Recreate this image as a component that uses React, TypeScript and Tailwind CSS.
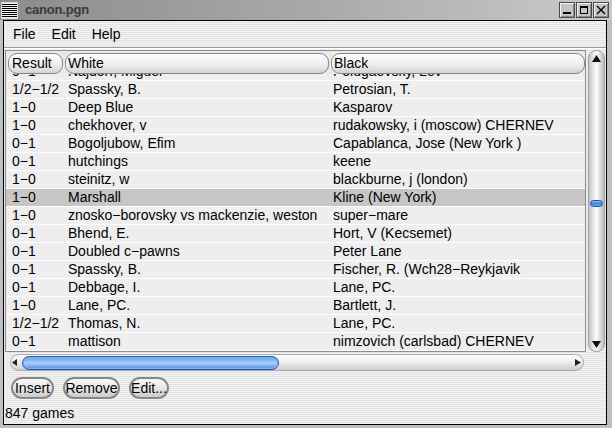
import React from "react";

type Row = { r: string; w: string; b: string; sel?: boolean };

const rows: Row[] = [
  { r: "0−1", w: "Najdorf, Miguel", b: "Polugaevsky, Lev" },
  { r: "1/2−1/2", w: "Spassky, B.", b: "Petrosian, T." },
  { r: "1−0", w: "Deep Blue", b: "Kasparov" },
  { r: "1−0", w: "chekhover, v", b: "rudakowsky, i (moscow) CHERNEV" },
  { r: "0−1", w: "Bogoljubow, Efim", b: "Capablanca, Jose (New York )" },
  { r: "0−1", w: "hutchings", b: "keene" },
  { r: "1−0", w: "steinitz, w", b: "blackburne, j (london)" },
  { r: "1−0", w: "Marshall", b: "Kline (New York)", sel: true },
  { r: "1−0", w: "znosko−borovsky vs mackenzie, weston", b: "super−mare" },
  { r: "0−1", w: "Bhend, E.", b: "Hort, V (Kecsemet)" },
  { r: "0−1", w: "Doubled c−pawns", b: "Peter Lane" },
  { r: "0−1", w: "Spassky, B.", b: "Fischer, R. (Wch28−Reykjavik" },
  { r: "0−1", w: "Debbage, I.", b: "Lane, PC." },
  { r: "1−0", w: "Lane, PC.", b: "Bartlett, J." },
  { r: "1/2−1/2", w: "Thomas, N.", b: "Lane, PC." },
  { r: "0−1", w: "mattison", b: "nimzovich (carlsbad) CHERNEV" },
];

function TitleButton({ kind }: { kind: "min" | "max" | "close" }) {
  return (
    <div className="w-[16px] h-[16px] border border-[#4a4a4a] bg-[#c4c4c4] shadow-[inset_1px_1px_0_#f4f4f4,inset_-1px_-1px_0_#8a8a8a] flex items-center justify-center">
      <svg width="12" height="12" viewBox="0 0 12 12">
        {kind === "min" && <rect x="2" y="8" width="8" height="2" fill="#000" />}
        {kind === "max" && (
          <>
            <rect x="2.5" y="2.5" width="7" height="7" fill="none" stroke="#000" strokeWidth="1" />
            <rect x="2" y="2" width="8" height="2" fill="#000" />
          </>
        )}
        {kind === "close" && (
          <path d="M2 2 L10 10 M10 2 L2 10" stroke="#000" strokeWidth="1.4" />
        )}
      </svg>
    </div>
  );
}

function HeaderButton({ label, w, pl }: { label: string; w: string; pl: string }) {
  return (
    <div
      className={`${w} ${pl} h-[21px] shrink-0 rounded-[9px] border border-[#858585] bg-gradient-to-b from-[#fefefe] via-[#f0f0f0] to-[#d4d4d4] shadow-[inset_1px_1px_0_#ffffff] leading-[19px] overflow-hidden whitespace-nowrap`}
    >
      {label}
    </div>
  );
}

function PushButton({ label, w }: { label: string; w: string }) {
  return (
    <div
      className={`${w} h-[22px] rounded-full border-2 border-[#888888] bg-gradient-to-b from-[#f8f8f8] via-[#e8e8e8] to-[#cbcbcb] flex items-center justify-center leading-[18px] whitespace-nowrap`}
    >
      {label}
    </div>
  );
}

export default function App() {
  return (
    <div className="w-[612px] h-[428px] flex flex-col bg-[#bfbfbf] font-['Liberation_Sans',Arial,sans-serif] text-[14px] text-black overflow-hidden">
      {/* Title bar */}
      <div className="h-[20px] shrink-0 flex items-center bg-gradient-to-r from-[#8c8c8c] via-[#a8a8a8] to-[#cacaca]">
        <div className="ml-[1px] w-[17px] h-[17px] bg-[#f2f2f2] border border-[#d8d8d8]">
          <svg width="15" height="15" viewBox="0 0 15 15">
            {[1, 3, 5, 7, 9, 11, 13].map((y) => (
              <rect key={y} x="0" y={y} width="15" height="1" fill="#000" />
            ))}
          </svg>
        </div>
        <span className="ml-[7px] font-bold text-[13px] text-[#3a3a3a] tracking-[-0.2px]">canon.pgn</span>
        <div className="ml-auto mr-[3px] flex gap-[1px]">
          <TitleButton kind="min" />
          <TitleButton kind="max" />
          <TitleButton kind="close" />
        </div>
      </div>

      {/* Window body */}
      <div className="flex-1 flex pl-[3px] pr-[5px] pb-[5px]">
        <div className="flex-1 flex flex-col border border-black bg-[repeating-linear-gradient(180deg,#f2f2f2_0px,#f2f2f2_1px,#e3e3e3_1px,#e3e3e3_2px)]">
          {/* Menubar */}
          <div className="h-[26px] shrink-0 flex items-center pl-[1px] pt-[1px]">
            <span className="px-[8px]">File</span>
            <span className="px-[8px]">Edit</span>
            <span className="px-[8px]">Help</span>
          </div>
          <div className="h-[2px] shrink-0 flex flex-col">
            <div className="h-[1px] bg-[#9c9c9c]" />
            <div className="h-[1px] bg-white" />
          </div>
          <div className="h-[1px] shrink-0" />

          {/* List block */}
          <div className="h-[302px] shrink-0 flex pl-[1px]">
            <div className="w-[581px] h-full border border-[#8c8c8c] flex flex-col bg-[#e9e9e9]">
              <div className="h-[23px] shrink-0 flex pt-[2px] pl-[2px] gap-[2px]">
                <HeaderButton label="Result" w="w-[55px]" pl="pl-[3px]" />
                <HeaderButton label="White" w="w-[264px]" pl="pl-[2px]" />
                <HeaderButton label="Black" w="w-[254px]" pl="pl-[2px]" />
              </div>
              <div className="flex-1 overflow-hidden bg-[#eeeeee]">
                <div className="-mt-[11px]">
                  {rows.map((row, i) => (
                    <div
                      key={i}
                      className={`h-[18px] flex border-b border-white leading-[17px] whitespace-nowrap ${
                        row.sel ? "bg-[#c6c6c6]" : "bg-[#eeeeee]"
                      }`}
                    >
                      <div className="w-[58px] shrink-0 pl-[6px] overflow-hidden">{row.r}</div>
                      <div className="w-[265px] shrink-0 pl-[4px] overflow-hidden">{row.w}</div>
                      <div className="flex-1 pl-[4px] overflow-hidden">{row.b}</div>
                    </div>
                  ))}
                </div>
              </div>
            </div>
            {/* Vertical scrollbar */}
            <div className="ml-[2px] w-[17px] h-full rounded-[8px] border border-[#a0a0a0] bg-gradient-to-r from-[#c6c6c6] via-[#fbfbfb] to-[#bcbcbc] flex flex-col items-center">
              <svg className="mt-[4px]" width="9" height="7" viewBox="0 0 9 7">
                <path d="M4.5 0 L9 7 L0 7 Z" fill="#111" />
              </svg>
              <div className="mt-[138px] w-[13px] h-[7px] rounded-full border border-[#1d4fb0] bg-gradient-to-b from-[#8cc0f6] via-[#3f84e6] to-[#6aa8f0]" />
              <div className="flex-1" />
              <svg className="mb-[3px]" width="9" height="7" viewBox="0 0 9 7">
                <path d="M0 0 L9 0 L4.5 7 Z" fill="#111" />
              </svg>
            </div>
          </div>

          <div className="h-[2px] shrink-0" />

          {/* Horizontal scrollbar */}
          <div className="h-[17px] shrink-0 pl-[6px] flex">
            <div className="w-[574px] h-full rounded-full border border-[#a8a8a8] bg-gradient-to-b from-[#fdfdfd] via-[#ececec] to-[#cdcdcd] flex items-center">
              <svg className="ml-[1px]" width="5" height="7" viewBox="0 0 5 7">
                <path d="M0 3.5 L5 0 L5 7 Z" fill="#222" />
              </svg>
              <div className="ml-[5px] w-[257px] h-[14px] rounded-full border border-[#2455b8] bg-gradient-to-b from-[#5f9cec] via-[#a9d0fa] to-[#4f8fe6] shadow-[inset_0_0_0_1px_#7fb3f2]" />
              <div className="flex-1" />
              <svg className="mr-[2px]" width="6" height="7" viewBox="0 0 6 7">
                <path d="M0 0 L6 3.5 L0 7 Z" fill="#222" />
              </svg>
            </div>
          </div>

          <div className="h-[6px] shrink-0" />

          {/* Buttons */}
          <div className="h-[22px] shrink-0 flex items-center pl-[7px] gap-[9px]">
            <PushButton label="Insert" w="w-[43px]" />
            <PushButton label="Remove" w="w-[57px]" />
            <PushButton label="Edit..." w="w-[40px]" />
          </div>

          <div className="h-[2px] shrink-0" />

          {/* Status */}
          <div className="flex-1 flex items-center pl-[1px] pt-[2px]">847 games</div>
        </div>
      </div>
    </div>
  );
}
